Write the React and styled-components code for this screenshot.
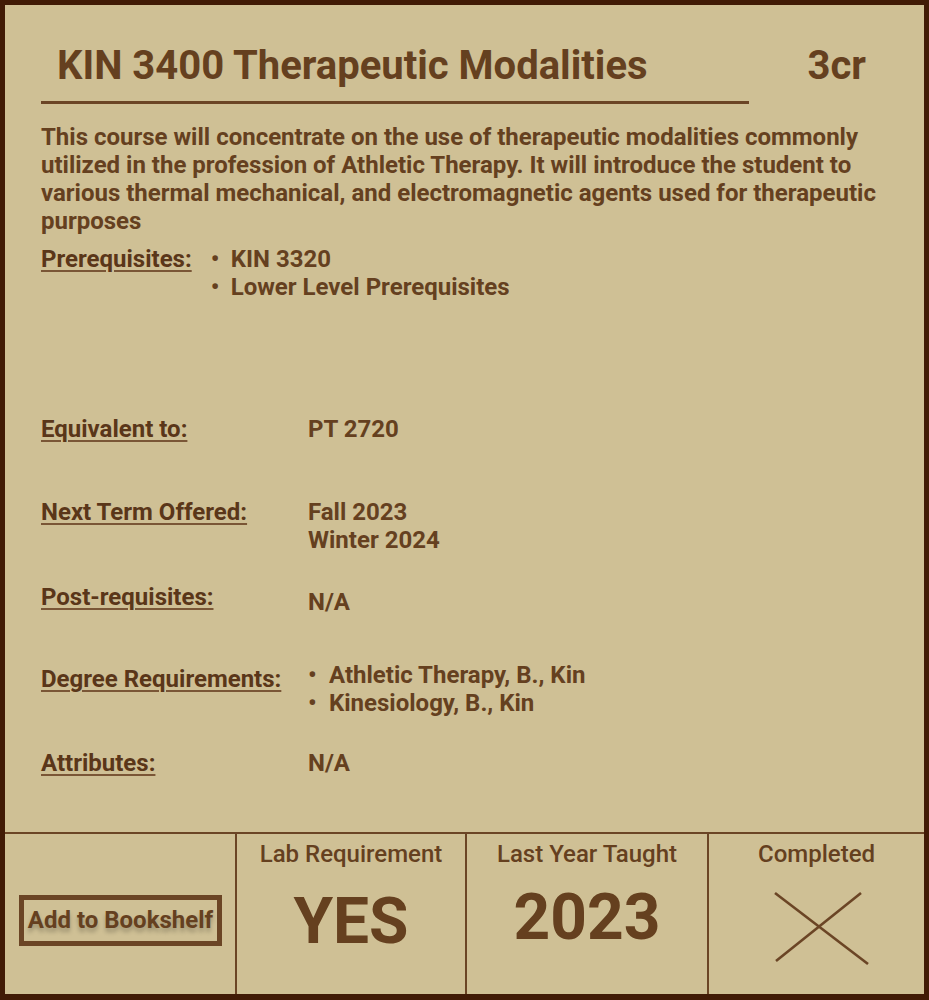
import React from "react";
import styled, { createGlobalStyle } from "styled-components";

const GlobalStyle = createGlobalStyle`
  html, body {
    margin: 0;
    padding: 0;
    background: #cfc095;
  }
  * { box-sizing: border-box; }
`;

const Card = styled.div`
  width: 929px;
  height: 1000px;
  border: 5px solid #411b06;
  border-bottom-width: 6px;
  background: #cfc095;
  color: #65401f;
  font-family: Roboto, "Liberation Sans", sans-serif;
  display: flex;
  flex-direction: column;
`;

const Body = styled.div`
  padding: 39px 0 0 36px;
  flex: 1;
`;

const TitleRow = styled.div`
  display: flex;
  justify-content: space-between;
  align-items: center;
  padding: 0 58px 0 16px;
`;

const Title = styled.h1`
  margin: 0;
  font-size: 40px;
  line-height: 44px;
  font-weight: 700;
`;

const Rule = styled.div`
  width: 708px;
  height: 3px;
  background: #6b4525;
  margin-top: 13px;
`;

const Description = styled.p`
  margin: 19px 0 0 0;
  padding-right: 36px;
  font-size: 24px;
  line-height: 28px;
  font-weight: 700;
`;

const Row = styled.div`
  display: ${(p) => (p.$inline ? "flex" : "grid")};
  grid-template-columns: 267px 1fr;
  gap: ${(p) => (p.$inline ? "19px" : "0")};
  margin-top: ${(p) => p.$top}px;
  font-size: 24px;
  line-height: 28px;
  font-weight: 700;
`;

const Label = styled.span`
  text-decoration: underline;
  text-underline-offset: 3px;
  text-decoration-thickness: 2px;
  text-decoration-color: #7a5636;
  color: #5a3619;
`;

const Value = styled.div`
  position: relative;
  top: ${(p) => p.$shift || 0}px;
`;

const Bullets = styled.ul`
  margin: 0;
  padding: 0;
  list-style: none;
  position: relative;
  top: ${(p) => p.$shift || 0}px;

  li {
    display: flex;
    gap: ${(p) => p.$gap || 11}px;
  }
  li::before {
    content: "•";
    width: 8px;
  }
`;

const Footer = styled.div`
  display: grid;
  grid-template-columns: 230px 230px 242px 1fr;
  height: 162px;
  border-top: 2px solid #6b4525;
`;

const Cell = styled.div`
  border-left: ${(p) => (p.$first ? "none" : "2px solid #6b4525")};
  display: flex;
  flex-direction: column;
  align-items: center;
  justify-content: ${(p) => (p.$center ? "center" : "flex-start")};
`;

const CellHead = styled.div`
  font-size: 24px;
  font-weight: 500;
  line-height: 28px;
  margin-top: 6px;
`;

const BigValue = styled.div`
  font-size: ${(p) => p.$size}px;
  font-weight: 700;
  line-height: 1;
  margin-top: ${(p) => p.$top}px;
`;

const ShelfButton = styled.button`
  margin: 12px 0 0 14px;
  align-self: flex-start;
  width: 203px;
  height: 51px;
  border: 5px solid #6b4525;
  background: transparent;
  color: #65401f;
  font-family: Roboto, "Liberation Sans", sans-serif;
  font-size: 24px;
  font-weight: 700;
  padding: 0;
  white-space: nowrap;
  text-shadow: 0 4px 4px rgba(0, 0, 0, 0.25);
  cursor: pointer;
`;

const Cross = () => (
  <svg width="100" height="80" viewBox="0 0 100 80" style={{ marginTop: 18, marginLeft: 4 }}>
    <line x1="6" y1="7" x2="99" y2="78" stroke="#6b4525" strokeWidth="2.6" />
    <line x1="92" y1="7" x2="7" y2="75" stroke="#6b4525" strokeWidth="2.6" />
  </svg>
);

export default function App() {
  return (
    <>
      <GlobalStyle />
      <Card>
        <Body>
          <TitleRow>
            <Title>KIN 3400 Therapeutic Modalities</Title>
            <Title>3cr</Title>
          </TitleRow>
          <Rule />
          <Description>
            This course will concentrate on the use of therapeutic modalities commonly
            utilized in the profession of Athletic Therapy. It will introduce the student to
            various thermal mechanical, and electromagnetic agents used for therapeutic
            purposes
          </Description>

          <Row $inline $top={10}>
            <Label>Prerequisites:</Label>
            <Bullets $gap={12}>
              <li>KIN 3320</li>
              <li>Lower Level Prerequisites</li>
            </Bullets>
          </Row>

          <Row $top={114}>
            <Label>Equivalent to:</Label>
            <Value>PT 2720</Value>
          </Row>

          <Row $top={55}>
            <Label>Next Term Offered:</Label>
            <Value>
              Fall 2023
              <br />
              Winter 2024
            </Value>
          </Row>

          <Row $top={29}>
            <Label>Post-requisites:</Label>
            <Value $shift={5}>N/A</Value>
          </Row>

          <Row $top={54}>
            <Label>Degree Requirements:</Label>
            <Bullets $shift={-4} $gap={13}>
              <li>Athletic Therapy, B., Kin</li>
              <li>Kinesiology, B., Kin</li>
            </Bullets>
          </Row>

          <Row $top={28}>
            <Label>Attributes:</Label>
            <Value>N/A</Value>
          </Row>
        </Body>

        <Footer>
          <Cell $first $center>
            <ShelfButton>Add to Bookshelf</ShelfButton>
          </Cell>
          <Cell>
            <CellHead>Lab Requirement</CellHead>
            <BigValue $size={64} $top={22}>YES</BigValue>
          </Cell>
          <Cell>
            <CellHead>Last Year Taught</CellHead>
            <BigValue $size={64} $top={18}>2023</BigValue>
          </Cell>
          <Cell>
            <CellHead>Completed</CellHead>
            <Cross />
          </Cell>
        </Footer>
      </Card>
    </>
  );
}
